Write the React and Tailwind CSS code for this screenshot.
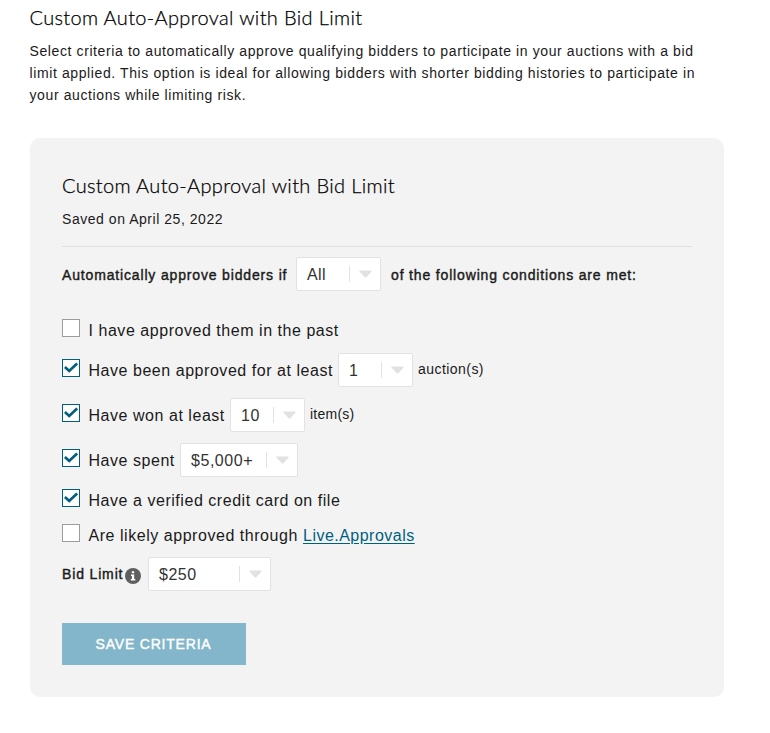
import React, { useState } from "react";

const Checkbox = ({ checked, onChange }) => (
  <button
    type="button"
    role="checkbox"
    aria-checked={checked}
    onClick={onChange}
    className={`w-[18px] h-[18px] mb-[5px] mr-[8.5px] shrink-0 border bg-white flex items-center justify-center ${
      checked ? "border-[#005f7f]" : "border-[#9c9c9c]"
    }`}
  >
    {checked && (
      <svg viewBox="0 0 14 11" className="w-3.5 h-[11px] mb-px" fill="none">
        <path
          d="M0.9 5L5.2 9L13.1 1.4"
          stroke="#005f7f"
          strokeWidth="2.7"
        />
      </svg>
    )}
  </button>
);

const SelectBox = ({ value, className }) => (
  <button
    type="button"
    className={`h-[34px] shrink-0 flex items-center bg-white border border-[#e2e2e2] rounded-[2px] text-[#333] ${className}`}
  >
    <span className="flex-1 text-left pl-2.5 pt-0.5">{value}</span>
    <span className="h-4 w-px bg-[#e2e2e2]" />
    <svg viewBox="0 0 13 8" className="w-[13px] h-2 ml-[9px] mr-2">
      <path
        d="M1 0.5H12Q13.2 0.7 12.4 1.7L7.6 6.9Q6.5 7.9 5.4 6.9L0.6 1.7Q-0.2 0.7 1 0.5Z"
        fill="#e2e2e2"
      />
    </svg>
  </button>
);

const InfoIcon = () => (
  <svg viewBox="0 0 16 16" className="w-4 h-4 mt-[3px] mr-[7px]">
    <circle cx="8" cy="8" r="8" fill="#5f5f5f" />
    <path d="M6.8 3.2H9.2V5.3H6.8ZM6 6.5H9.2V11H10.3V12.5H5.8V11H6.9V8H6Z" fill="#fff" />
  </svg>
);

const initialChecks = {
  past: false,
  auctions: true,
  items: true,
  spent: true,
  card: true,
  live: false,
};

const App = () => {
  const [checks, setChecks] = useState(initialChecks);

  const toggle = (key) => setChecks({ ...checks, [key]: !checks[key] });

  return (
    <div className="w-[770px] h-[733px] bg-white pl-[29.5px] font-['Liberation_Sans',Arial,sans-serif] text-[#1a1a1a]">
      <h1 className="pt-[3px] h-[40px] text-[20px] leading-7 font-light font-[Lato,sans-serif] tracking-[0.35px] whitespace-nowrap text-black [-webkit-text-stroke:0.25px]">
        Custom Auto-Approval with Bid Limit
      </h1>
      <p className="text-[14px] leading-[22px] tracking-[0.605px] whitespace-nowrap">
        Select criteria to automatically approve qualifying bidders to participate in your auctions with a bid
        <br />
        limit applied. This option is ideal for allowing bidders with shorter bidding histories to participate in
        <br />
        your auctions while limiting risk.
      </p>

      <div className="mt-8 ml-[0.5px] w-[694px] h-[559px] rounded-[10px] bg-[#f3f3f3] px-8 pt-8">
        {/* HEADER */}
        <div className="h-[77px] w-[630px] border-b border-[#e0e0e0]">
          <h2 className="h-[38px] text-[20px] leading-[30px] font-light font-[Lato,sans-serif] tracking-[0.35px] whitespace-nowrap text-black [-webkit-text-stroke:0.25px]">
            Custom Auto-Approval with Bid Limit
          </h2>
          <p className="text-[14px] leading-[22px] tracking-[0.54px]">Saved on April 25, 2022</p>
        </div>

        <div className="mt-2.5 h-[34px] flex items-center text-[14px] tracking-[0.84px] whitespace-nowrap">
          <span className="w-[234px] pt-0.5 [-webkit-text-stroke:0.4px]">Automatically approve bidders if</span>
          <SelectBox value="All" className="w-[85px] text-[16px] tracking-[0.4px]" />
          <span className="ml-2.5 pt-0.5 [-webkit-text-stroke:0.4px]">of the following conditions are met:</span>
        </div>

        {/* CONDITIONS */}
        <div className="mt-[22px] text-[16px] tracking-[0.54px] whitespace-nowrap">
          <div className="h-[35px] flex items-center">
            <Checkbox checked={checks.past} onChange={() => toggle("past")} />
            <span>I have approved them in the past</span>
          </div>
          <div className="h-[45px] flex items-center">
            <Checkbox checked={checks.auctions} onChange={() => toggle("auctions")} />
            <span className="w-[249.5px]">Have been approved for at least</span>
            <SelectBox value="1" className="w-[75px] mb-px" />
            <span className="ml-[5px] mb-0.5 text-[14px] tracking-[0.45px]">auction(s)</span>
          </div>
          <div className="h-[45px] flex items-center">
            <Checkbox checked={checks.items} onChange={() => toggle("items")} />
            <span className="w-[141.5px]">Have won at least</span>
            <SelectBox value="10" className="w-[75px] mb-px" />
            <span className="ml-[5px] mb-0.5 text-[14px] tracking-[0.25px]">item(s)</span>
          </div>
          <div className="h-[45px] flex items-center">
            <Checkbox checked={checks.spent} onChange={() => toggle("spent")} />
            <span className="w-[91.5px]">Have spent</span>
            <SelectBox value="$5,000+" className="w-[118px] mb-px" />
          </div>
          <div className="h-[35px] flex items-center">
            <Checkbox checked={checks.card} onChange={() => toggle("card")} />
            <span>Have a verified credit card on file</span>
          </div>
          <div className="h-[35px] flex items-center">
            <Checkbox checked={checks.live} onChange={() => toggle("live")} />
            <span className="w-[214.5px]">Are likely approved through</span>
            <a href="#" className="text-[#005f7f] tracking-[0.48px] underline underline-offset-2">Live.Approvals</a>
          </div>
        </div>

        <div className="mt-1 h-[34px] flex items-center whitespace-nowrap">
          <span className="w-[63px] text-[14px] tracking-[0.85px] [-webkit-text-stroke:0.4px]">Bid Limit</span>
          <InfoIcon />
          <SelectBox value="$250" className="w-[123px] text-[16px] tracking-[0.5px]" />
        </div>

        <button
          type="button"
          className="mt-8 w-[184px] h-[42px] pr-px bg-[#84b6cb] text-white text-[14px] tracking-[0.8px] [-webkit-text-stroke:0.4px]"
        >
          SAVE CRITERIA
        </button>
      </div>
    </div>
  );
};

export default App;
